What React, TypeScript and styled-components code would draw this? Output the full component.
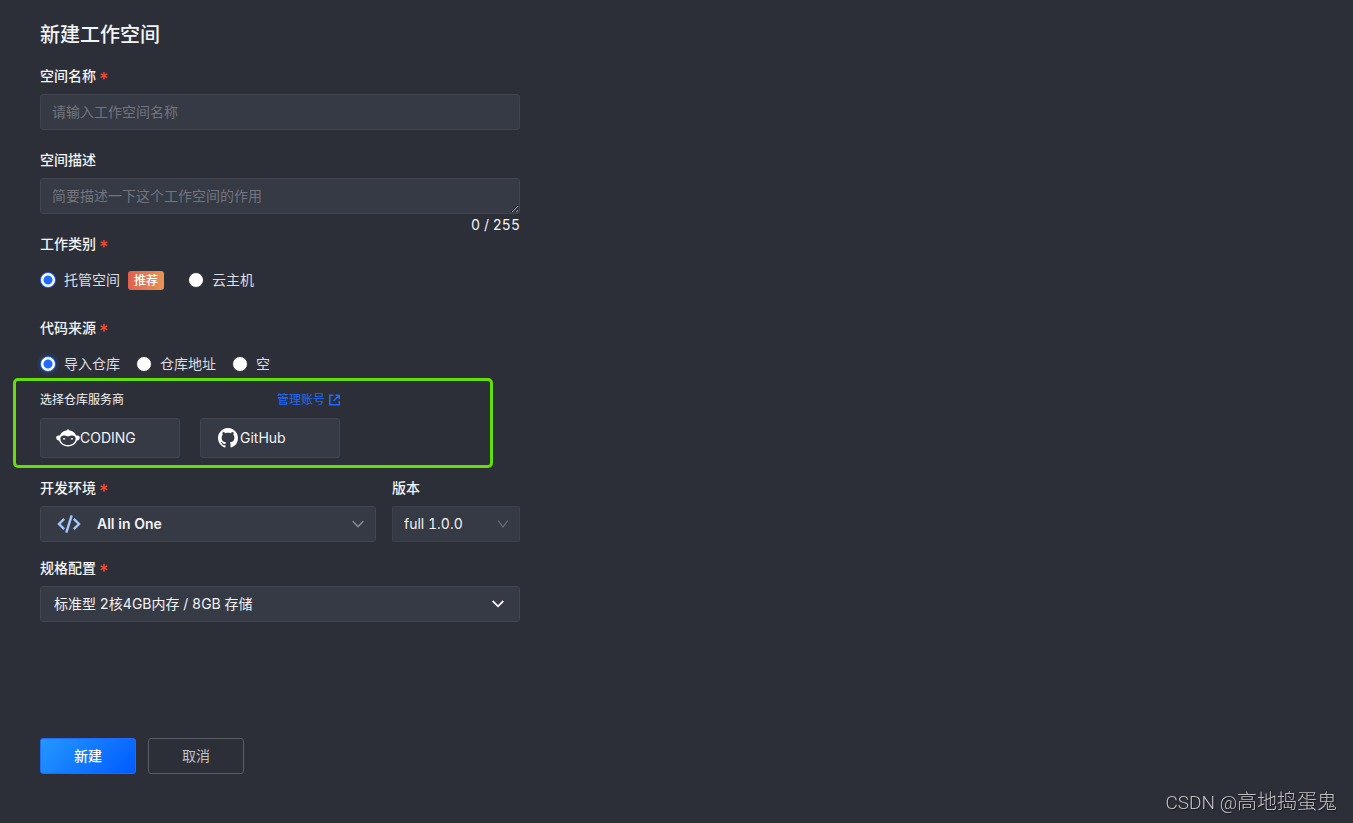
import React, { useState } from "react";
import styled, { createGlobalStyle } from "styled-components";

const GlobalStyle = createGlobalStyle`
  *, *::before, *::after { box-sizing: border-box; }
  body {
    margin: 0;
    background: #2d2f38;
    color: #f2f4f6;
    font-family: Inter, "Noto Sans CJK SC", sans-serif;
    font-size: 14px;
    line-height: 20px;
  }
  button, input, select, textarea { font: inherit; color: inherit; }
`;

const Page = styled.main`
  min-height: 100vh;
  padding: 24px 40px;
`;

const Form = styled.form`
  max-width: 480px;
`;

const Title = styled.h1`
  margin: 0 0 20px;
  font-size: 20px;
  line-height: 22px;
  font-weight: 500;
`;

const Field = styled.div<{ $space?: number }>`
  display: flex;
  flex-direction: column;
  gap: 8px;
  margin-bottom: ${(p) => p.$space ?? 20}px;
`;

const Group = styled.fieldset<{ $tight?: boolean }>`
  margin: 0 0 ${(p) => (p.$tight ? 6 : 20)}px;
  padding: 0;
  border: 0;
  min-width: 0;
`;

const Label = styled.label`
  font-weight: 500;
`;

const Legend = styled.legend`
  padding: 0;
  margin-bottom: 8px;
  font-weight: 500;
`;

const Star = styled.span`
  margin-left: 3px;
  color: #f0492e;
  font-size: 18px;
  line-height: 1;
  vertical-align: -5px;
`;

const LabelRow = styled.div`
  height: 20px;
`;

const TextInput = styled.input`
  width: 100%;
  height: 36px;
  padding: 0 11px 2px;
  background: #363a44;
  border: 1px solid #42454f;
  border-radius: 3px;
  outline: none;
  &::placeholder { color: #72757e; opacity: 1; }
`;

const TextArea = styled.textarea`
  display: block;
  width: 100%;
  height: 36px;
  padding: 7px 11px;
  background: #363a44;
  border: 1px solid #42454f;
  border-radius: 3px;
  outline: none;
  resize: vertical;
  overflow: hidden;
  &::placeholder { color: #72757e; opacity: 1; }
`;

const Counter = styled.div`
  height: 20px;
  text-align: right;
  line-height: 22px;
  font-variant-numeric: tabular-nums;
`;

const Options = styled.div<{ $gap: number }>`
  display: flex;
  align-items: center;
  gap: ${(p) => p.$gap}px;
  height: 36px;
`;

const Option = styled.label`
  display: flex;
  align-items: center;
  gap: 8px;
  color: #dcdee3;
`;

const Radio = styled.input`
  appearance: none;
  width: 16px;
  height: 16px;
  margin: 0;
  border: 1px solid #2d2f38;
  border-radius: 50%;
  background: #fff;
  &:checked {
    border-color: #1f6bff;
    background: radial-gradient(circle, #1f6bff 4px, #fff 5px);
  }
`;

const HaloRadio = styled(Radio)`
  &:checked { box-shadow: 0 0 0 3px #29364f; }
`;

const Tag = styled.span`
  padding: 0 6px;
  border-radius: 3px;
  background: linear-gradient(90deg, #df614e, #e79456);
  color: #fff;
  font-size: 12px;
  line-height: 19px;
  font-weight: 500;
`;

const Providers = styled.section`
  position: relative;
  margin-bottom: 20px;
`;

const ProvidersHead = styled.div`
  display: flex;
  justify-content: space-between;
  width: 300px;
  margin-bottom: 6px;
  font-size: 12px;
  line-height: 24px;
`;

const ManageLink = styled.a`
  display: flex;
  align-items: center;
  gap: 4px;
  color: #1f6bff;
  text-decoration: none;
`;

const ProviderRow = styled.div`
  display: flex;
  gap: 20px;
`;

const Provider = styled.button`
  display: flex;
  align-items: center;
  width: 140px;
  height: 40px;
  padding: 0 15px;
  background: #363a44;
  border: 1px solid #42454f;
  border-radius: 3px;
`;

const IconBox = styled.span`
  display: flex;
  justify-content: center;
  width: 24px;
`;

const Highlight = styled.div`
  position: absolute;
  top: -10px;
  left: -27px;
  width: 100%;
  height: 90px;
  border: 3px solid #62df05;
  border-radius: 5px;
  pointer-events: none;
`;

const Columns = styled.div`
  display: grid;
  grid-template-columns: 1fr 128px;
  gap: 16px;
`;

const SelectBox = styled.div`
  display: grid;
  align-items: center;
  > * { grid-area: 1 / 1; }
`;

const Select = styled.select<{ $indent: number; $bold?: boolean; $square?: boolean }>`
  appearance: none;
  width: 100%;
  height: 36px;
  padding: 0 32px 0 ${(p) => p.$indent}px;
  background: #363a44;
  border: 1px solid ${(p) => (p.$square ? "#3d404b" : "#42454f")};
  border-radius: ${(p) => (p.$square ? 1 : 3)}px;
  outline: none;
  font-weight: ${(p) => (p.$bold ? 600 : 400)};
  font-variant-numeric: tabular-nums;
`;

const Arrow = styled.svg<{ $tone: string; $inset: number }>`
  justify-self: end;
  margin-right: ${(p) => p.$inset}px;
  color: ${(p) => p.$tone};
  pointer-events: none;
`;

const CodeMark = styled.svg`
  margin-left: 17px;
  pointer-events: none;
`;

const Actions = styled.div`
  display: flex;
  gap: 12px;
  margin-top: 116px;
`;

const ActionButton = styled.button<{ $primary?: boolean }>`
  width: 96px;
  height: 36px;
  padding: 0;
  border-radius: 3px;
  border: 1px solid ${(p) => (p.$primary ? "#1f6bff" : "#5b5e66")};
  background: ${(p) => (p.$primary ? "linear-gradient(135deg, #2499ff, #0059ff) border-box" : "transparent")};
  color: ${(p) => (p.$primary ? "#fff" : "#c0c2c7")};
  font-weight: ${(p) => (p.$primary ? 500 : 400)};
`;

const Watermark = styled.div`
  position: fixed;
  right: 16px;
  bottom: 5px;
  color: #c0c1c4;
  font-family: Roboto, "Noto Sans CJK SC", sans-serif;
  font-size: 20px;
  font-weight: 300;
  line-height: 30px;
  text-shadow: 1px 1px 1px #17181c;
`;

const WatermarkSite = styled.span`
  font-size: 19px;
`;

const CodingIcon = () => (
  <svg width="24" height="18" viewBox="0 0 24 18" fill="#fff" aria-hidden="true">
    <path d="M12 .4c.8 0 1.300.5 1.500 1.200 3 .4 5.400 2.200 6.700 5h1.300c1.300 0 2.300.7 2.300 2 0 1.700-1.200 3-2.900 3.200C19.700 15.200 16.200 17.400 12 17.400S4.300 15.200 3.100 11.800C1.400 11.600.2 10.300.2 8.600c0-1.300 1-2 2.300-2h1.300c1.300-2.800 3.700-4.600 6.700-5C10.700.9 11.200.4 12 .4Z" />
    <path fill="#363a44" d="M4.400 9.600c0-2 1.500-3.100 3.600-3.100 1.600 0 2.600.8 4 .8s2.400-.8 4-.8c2.100 0 3.600 1.100 3.600 3.100 0 3.900-3.200 6.500-7.600 6.500s-7.600-2.600-7.600-6.500Z" />
    <path d="M7 9.200h2.200v1.400H7zM14.800 9.200H17v1.400h-2.200z" />
  </svg>
);

const GitHubIcon = () => (
  <svg width="20" height="20" viewBox="0 0 16 16" fill="#fff" aria-hidden="true">
    <path d="M8 0C3.58 0 0 3.58 0 8c0 3.54 2.29 6.53 5.47 7.59.4.07.55-.17.55-.38 0-.19-.01-.82-.01-1.49-2.01.37-2.53-.49-2.69-.94-.09-.23-.48-.94-.82-1.13-.28-.15-.68-.52-.01-.53.63-.01 1.08.58 1.23.82.72 1.21 1.87.87 2.33.66.07-.52.28-.87.51-1.07-1.78-.2-3.64-.89-3.64-3.95 0-.87.31-1.59.82-2.15-.08-.2-.36-1.02.08-2.12 0 0 .67-.21 2.2.82.64-.18 1.32-.27 2-.27s1.36.09 2 .27c1.53-1.04 2.2-.82 2.2-.82.44 1.100.16 1.920.08 2.120.51.56.82 1.270.82 2.150 0 3.070-1.870 3.750-3.650 3.950.29.25.54.73.54 1.480 0 1.070-.01 1.930-.01 2.200 0 .21.15.46.55.38A8.010 8.010 0 0 0 16 8c0-4.420-3.580-8-8-8Z" />
  </svg>
);

const ExternalIcon = () => (
  <svg width="11" height="12" viewBox="0 0 11 12" fill="none" stroke="currentColor" strokeWidth="1.6" aria-hidden="true">
    <path d="M4.500 1.300H.8v9.400h9.400V7M6.500 1.300h3.700V5M10 1.500 4.500 7" />
  </svg>
);

const Required = () => <Star aria-hidden="true">*</Star>;

export default function App() {
  const [name, setName] = useState("");
  const [description, setDescription] = useState("");

  return (
    <Page>
      <GlobalStyle />
      <Form onSubmit={(e) => e.preventDefault()}>
        <Title>新建工作空间</Title>

        <Field>
          <LabelRow><Label htmlFor="name">空间名称<Required /></Label></LabelRow>
          <TextInput id="name" placeholder="请输入工作空间名称" value={name} onChange={(e) => setName(e.target.value)} />
        </Field>

        <Field $space={0}>
          <LabelRow><Label htmlFor="description">空间描述</Label></LabelRow>
          <TextArea
            id="description"
            rows={1}
            maxLength={255}
            placeholder="简要描述一下这个工作空间的作用"
            value={description}
            onChange={(e) => setDescription(e.target.value)}
          />
        </Field>
        <Counter>{description.length} / 255</Counter>

        <Group>
          <Legend><LabelRow>工作类别<Required /></LabelRow></Legend>
          <Options $gap={24}>
            <Option>
              <Radio type="radio" name="category" defaultChecked />
              托管空间
              <Tag>推荐</Tag>
            </Option>
            <Option>
              <Radio type="radio" name="category" />
              云主机
            </Option>
          </Options>
        </Group>

        <Group $tight>
          <Legend><LabelRow>代码来源<Required /></LabelRow></Legend>
          <Options $gap={16}>
            <Option>
              <HaloRadio type="radio" name="source" defaultChecked />
              导入仓库
            </Option>
            <Option>
              <HaloRadio type="radio" name="source" />
              仓库地址
            </Option>
            <Option>
              <HaloRadio type="radio" name="source" />
              空
            </Option>
          </Options>
        </Group>

        <Providers>
          <ProvidersHead>
            <span>选择仓库服务商</span>
            <ManageLink href="#accounts">管理账号<ExternalIcon /></ManageLink>
          </ProvidersHead>
          <ProviderRow>
            <Provider type="button">
              <IconBox><CodingIcon /></IconBox>
              CODING
            </Provider>
            <Provider type="button">
              <IconBox><GitHubIcon /></IconBox>
              GitHub
            </Provider>
          </ProviderRow>
          <Highlight />
        </Providers>

        <Columns>
          <Field $space={16}>
            <LabelRow><Label htmlFor="environment">开发环境<Required /></Label></LabelRow>
            <SelectBox>
              <Select id="environment" $indent={56} $bold>
                <option>All in One</option>
              </Select>
              <CodeMark width="24" height="18" viewBox="0 0 24 18" fill="none" stroke="#a5c8ff" strokeWidth="2.4" aria-hidden="true">
                <path d="M7.200 3.800 2 9l5.200 5.200M16.800 3.800 22 9l-5.200 5.200M14.700.4 9.300 17.600" />
              </CodeMark>
              <Arrow $tone="#858891" $inset={12} width={12} height={8} viewBox="0 0 12 8" fill="none" stroke="currentColor" strokeWidth="1.6">
                <path d="m.7 1.200 5.300 5.300 5.300-5.300" />
              </Arrow>
            </SelectBox>
          </Field>
          <Field $space={16}>
            <LabelRow><Label htmlFor="version">版本</Label></LabelRow>
            <SelectBox>
              <Select id="version" $indent={11} $square>
                <option>full 1.0.0</option>
              </Select>
              <Arrow $tone="#6b6e77" $inset={11} width={12} height={8} viewBox="0 0 12 8" fill="none" stroke="currentColor" strokeWidth="1.2">
                <path d="m1.200.5 4.800 6.500L10.800.5" />
              </Arrow>
            </SelectBox>
          </Field>
        </Columns>

        <Field>
          <LabelRow><Label htmlFor="spec">规格配置<Required /></Label></LabelRow>
          <SelectBox>
            <Select id="spec" $indent={13}>
              <option>标准型 2核4GB内存 / 8GB 存储</option>
            </Select>
            <Arrow $tone="#f5f6f8" $inset={16} width={12} height={8} viewBox="0 0 12 8" fill="none" stroke="currentColor" strokeWidth="1.8">
              <path d="m.7 1 5.300 5.300 5.300-5.300" />
            </Arrow>
          </SelectBox>
        </Field>

        <Actions>
          <ActionButton type="submit" $primary>新建</ActionButton>
          <ActionButton type="button">取消</ActionButton>
        </Actions>
      </Form>
      <Watermark><WatermarkSite>CSDN @</WatermarkSite>高地捣蛋鬼</Watermark>
    </Page>
  );
}
